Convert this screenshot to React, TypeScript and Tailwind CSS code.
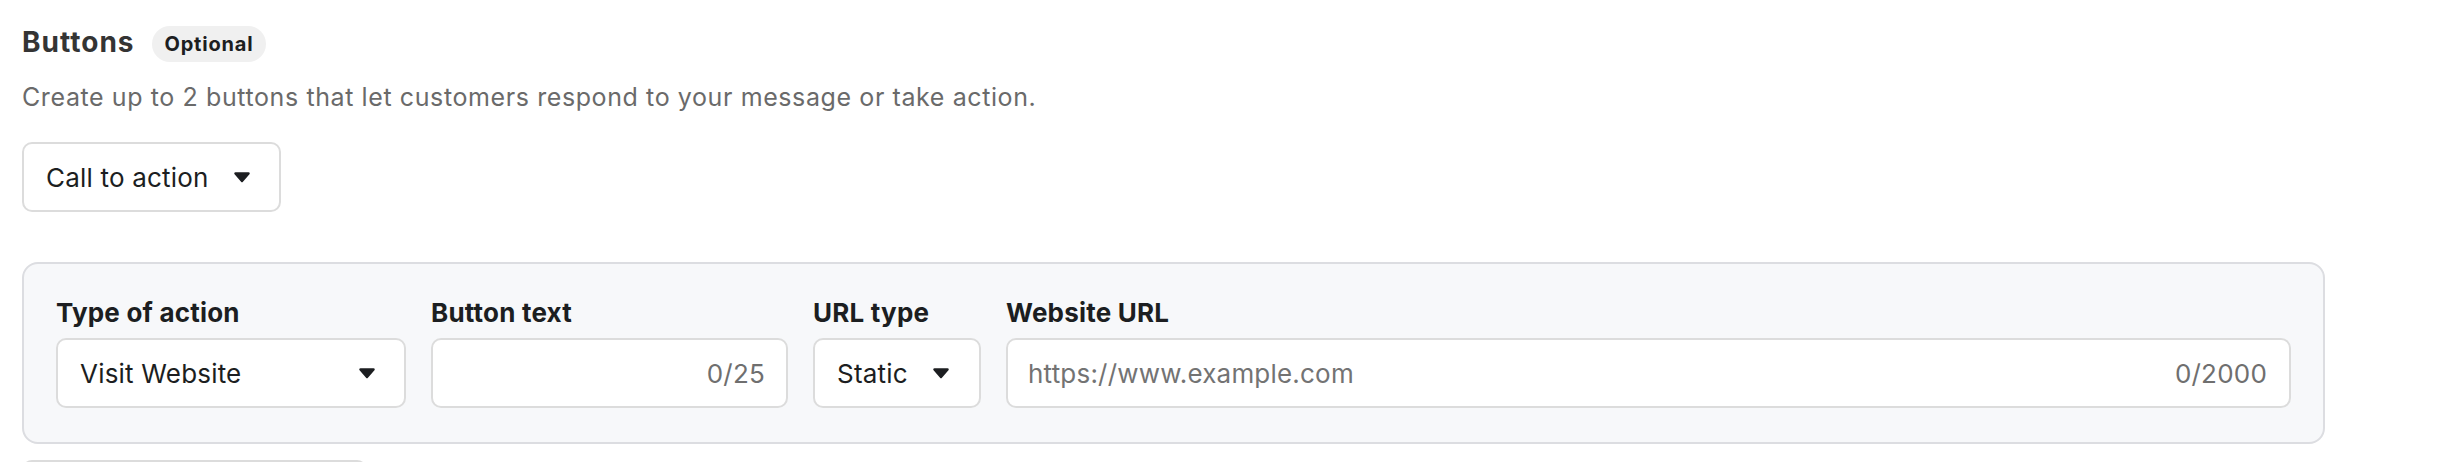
import React from "react";

const font = { fontFamily: "Inter, 'Noto Sans', sans-serif" } as const;

function Caret() {
  return (
    <svg width="18" height="11" viewBox="0 0 18 11" className="shrink-0">
      <polygon
        points="2.5,1.5 15.5,1.5 9,9"
        fill="#1c1e21"
        stroke="#1c1e21"
        strokeWidth="2.5"
        strokeLinejoin="round"
      />
    </svg>
  );
}

function Label({ children }: { children: React.ReactNode }) {
  return (
    <div className="text-[26px] leading-[30px] font-bold text-[#1c1e21] tracking-[0.2px] mb-[10px] whitespace-nowrap">
      {children}
    </div>
  );
}

export default function App() {
  return (
    <div className="h-[462px] w-full overflow-hidden bg-white" style={font}>
      <div className="ml-[22px] w-[2303px] pt-[24px]">
        <div className="flex items-center gap-[17px]">
          <h2 className="text-[28px] leading-[36px] mb-[4px] font-bold text-[#343434] tracking-[1px]">
            Buttons
          </h2>
          <span className="h-[36px] px-[13px] rounded-full bg-[#f0f0f0] flex items-center text-[20px] font-bold text-[#1c1e21] tracking-[0.8px]">
            Optional
          </span>
        </div>

        <p className="mt-[17px] text-[25px] leading-[32px] text-[#6a6a6a] tracking-[0.6px] whitespace-nowrap">
          Create up to 2 buttons that let customers respond to your message or take action.
        </p>

        <button className="mt-[29px] h-[70px] w-[259px] border-2 border-[#dcdcdc] rounded-[10px] bg-white flex items-center justify-between pl-[22px] pr-[28px] text-[26px] tracking-[0.2px] text-[#1c1e21]">
          <span>Call to action</span>
          <Caret />
        </button>

        <div className="mt-[50px] border-2 border-[#dcdde1] rounded-[16px] bg-[#f7f8fa] pt-[34px] pb-[34px] px-[32px] flex gap-[25px]">
          <div className="w-[350px] shrink-0">
            <Label>Type of action</Label>
            <div className="h-[70px] border-2 border-[#dcdcdc] rounded-[10px] bg-white flex items-center justify-between pl-[22px] pr-[28px] text-[26px] tracking-[0.2px] text-[#1c1e21]">
              <span>Visit Website</span>
              <Caret />
            </div>
          </div>

          <div className="w-[357px] shrink-0">
            <Label>Button text</Label>
            <div className="h-[70px] border-2 border-[#dcdcdc] rounded-[10px] bg-white flex items-center justify-end pl-[22px] pr-[21px] text-[26px] tracking-[0.2px] text-[#6f6f6f]">
              <span>0/25</span>
            </div>
          </div>

          <div className="w-[168px] shrink-0">
            <Label>URL type</Label>
            <div className="h-[70px] border-2 border-[#dcdcdc] rounded-[10px] bg-white flex items-center justify-between pl-[22px] pr-[29px] text-[26px] tracking-[0.2px] text-[#1c1e21]">
              <span>Static</span>
              <Caret />
            </div>
          </div>

          <div className="flex-1 min-w-0">
            <Label>Website URL</Label>
            <div className="h-[70px] border-2 border-[#dcdcdc] rounded-[10px] bg-white flex items-center justify-between pl-[20px] pr-[22px] text-[26px] tracking-[0.2px]">
              <span className="text-[#737373]">https://www.example.com</span>
              <span className="text-[#6f6f6f]">0/2000</span>
            </div>
          </div>
        </div>

        <div className="mt-[16px] h-[70px] w-[345px] border-2 border-[#dcdcdc] rounded-[10px] bg-white" />
      </div>
    </div>
  );
}
